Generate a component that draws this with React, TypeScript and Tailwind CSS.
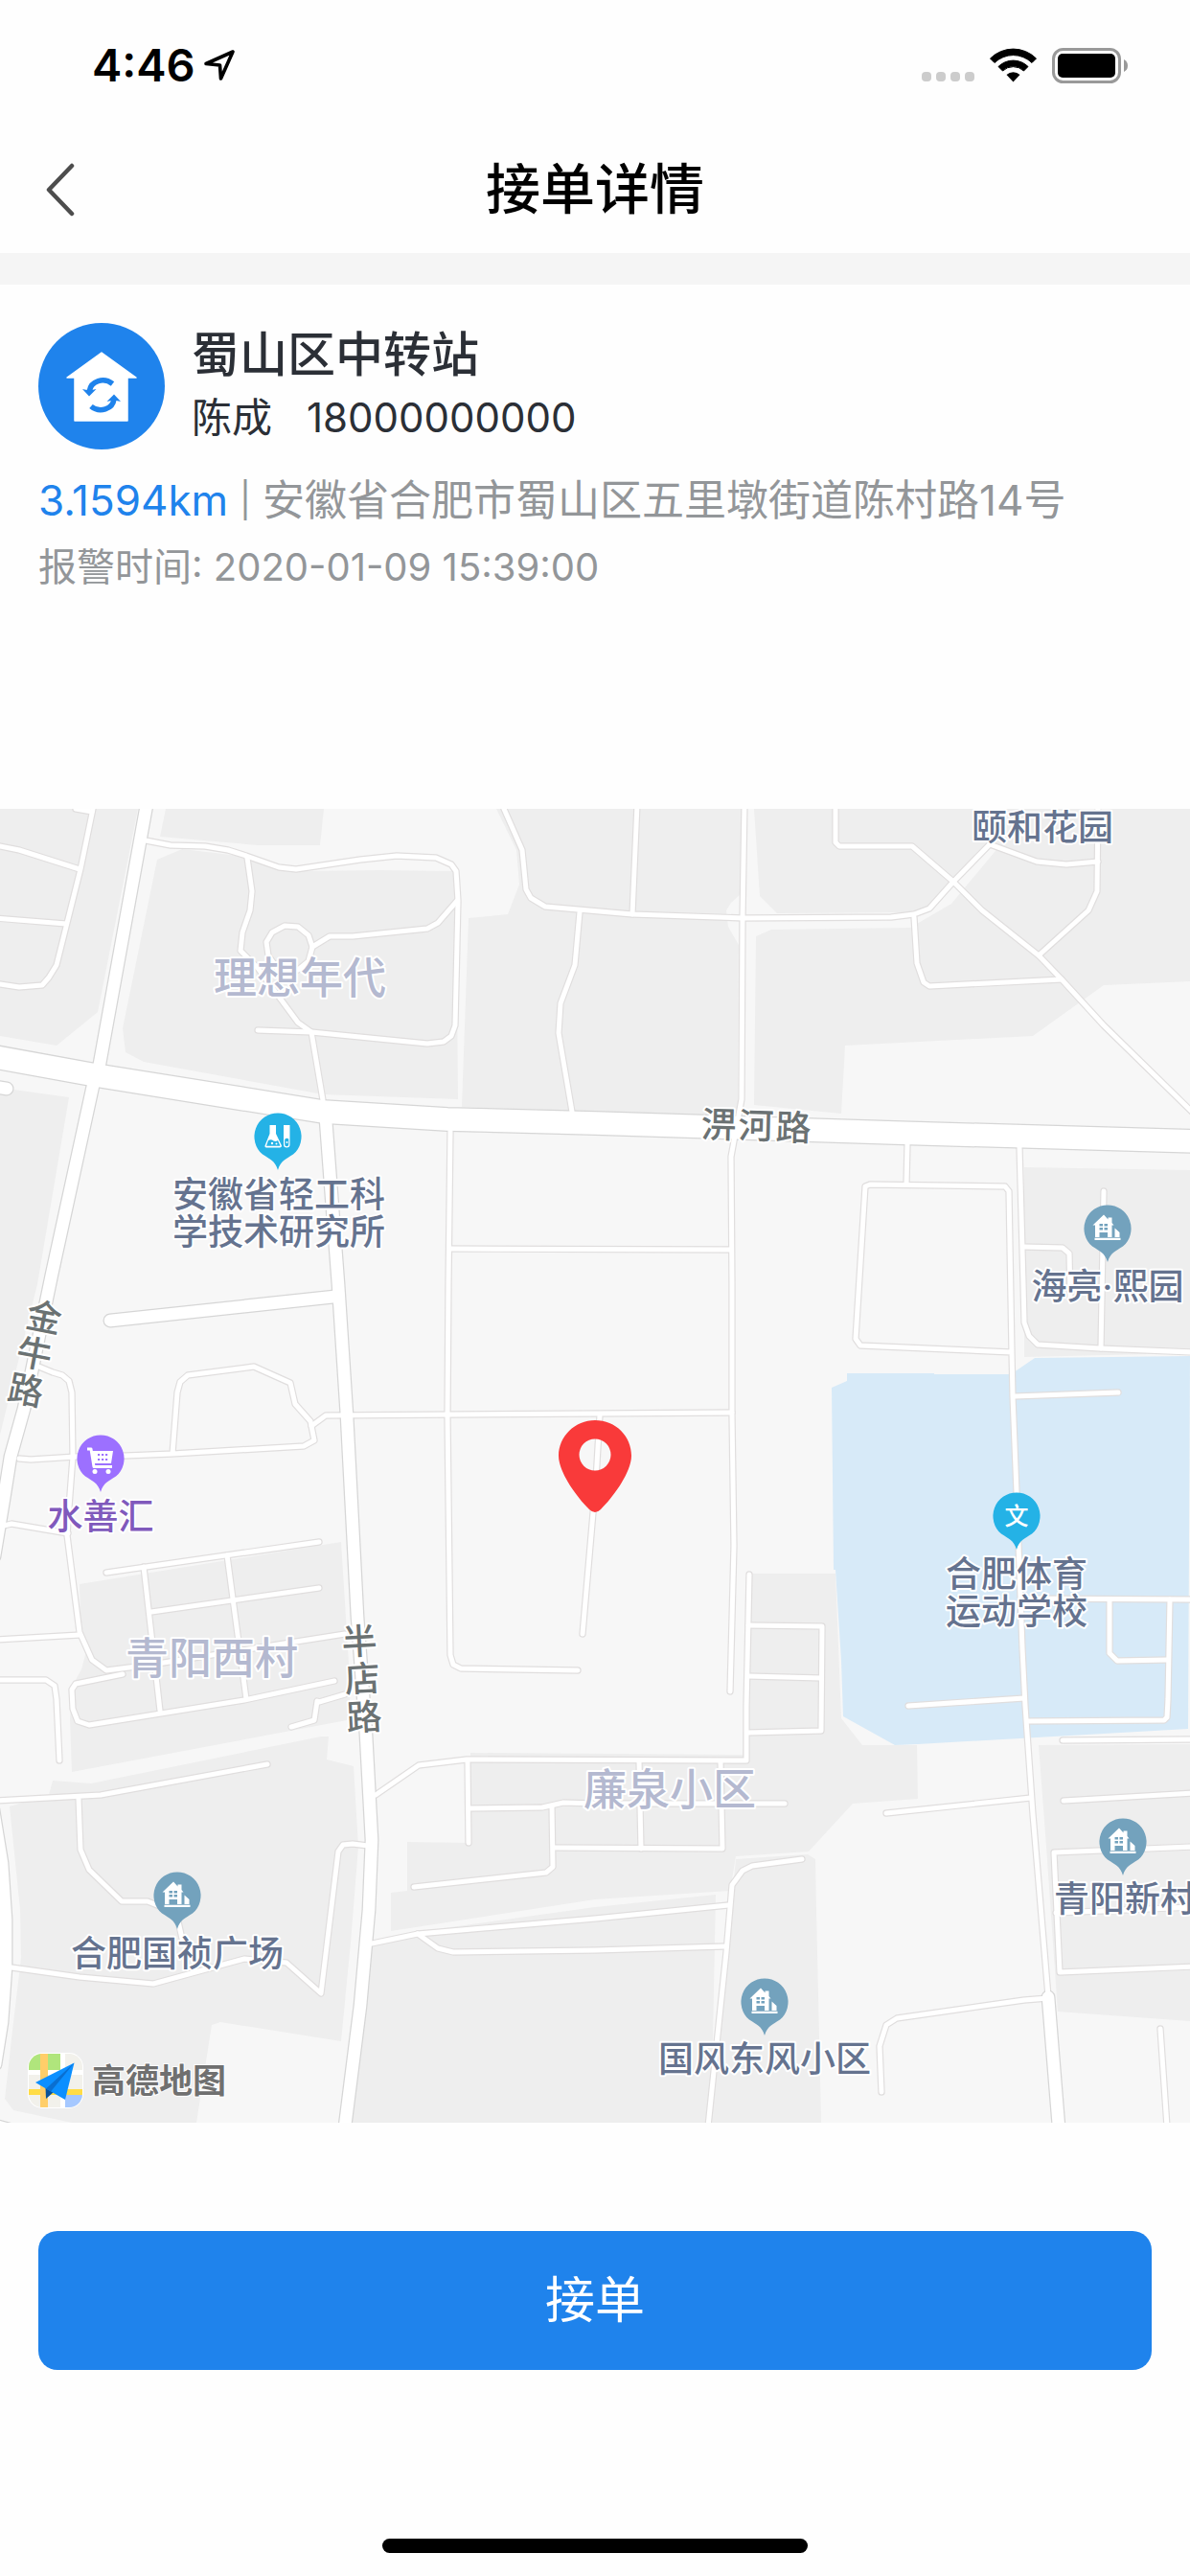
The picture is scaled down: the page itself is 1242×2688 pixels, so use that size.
import type { ReactNode } from "react";

const BLOCKS = [
  "0,0 144,0 102,212 59,247 0,237",
  "173,0 338,0 334,38 269,38 167,29",
  "164,53 190,42 250,49 291,63 309,65 396,64 476,65 478,303 337,298 150,264 131,254 128,229",
  "518,0 539,43 542,79 530,110 489,114 482,311 621,316 770,320 771,142 760,123 758,106 763,98 773,89 775,0",
  "787,0 793,91 811,109 950,108 970,102 1033,37 1050,0",
  "1043,39 993,99 950,124 805,126 789,133 787,309 878,318 882,247 1078,237 1152,184 1242,180 1242,0 1034,0 1034,37",
  "1069,374 1242,377 1242,568 1069,572",
  "0,291 72,301 39,496 0,653",
  "83,809 356,765 366,923 362,951 75,1005 73,950 75,916 85,898 90,879 84,843",
  "55,1014 95,1017 335,968 343,968 341,992 369,999 374,1083 366,1183 356,1286 230,1266 221,1269 205,1371 75,1371 14,1358 5,1346 14,1266 22,1199 21,1149 10,1041 51,1029",
  "491,985 775,987 779,798 872,798 878,949 900,977 957,977 958,1033 890,1038 844,1088 768,1093 762,1129 621,1138 408,1171 408,1131 425,1129 425,1078 489,1079",
  "388,1184 434,1172 621,1146 747,1133 744,1283 740,1371 367,1371",
  "768,1096 843,1091 851,1096 852,1149 857,1371 740,1371 758,1193",
  "1084,977 1242,976 1242,1265 1104,1255 1092,1083",
];

const CAMPUS =
  "884,589 975,589 975,590 1053,590 1061,586 1080,573 1242,571 1240,960 958,976 934,977 880,947 878,889 874,826 872,794 870,794 868,604 884,597";

const LANES = [
  "79,0 96,3",
  "97,0 84,63 59,163 51,176 44,184 20,186 0,183",
  "-5,38 20,43 83,63",
  "-5,114 69,120",
  "152,33 178,38 214,39 238,43 257,49 291,61 309,63 376,53 414,49 455,51 471,58 476,65 478,96 475,226 471,237 463,243 446,245 325,233 269,231",
  "258,51 263,86 261,106 253,129 251,148 269,166 291,196 311,223 325,233 337,304",
  "291,169 280,153 278,139 284,129 297,122 311,123 322,132 326,144 322,159 311,168 291,169",
  "326,144 344,133 368,133 446,125 457,119 477,96",
  "526,0 545,43 549,84 554,93 569,102 660,110 775,114 930,113 954,110 970,104 995,76 1033,37 1082,55 1113,58 1146,55",
  "605,108 600,163 585,203 583,234 597,316",
  "665,-5 660,110",
  "777,-5 775,114 774,303 763,363 764,496 764,633 766,769 762,921",
  "872,-5 872,35 876,39 952,39 995,76 1025,106 1084,153 1108,178 1152,226 1245,317",
  "1146,-5 1145,86 1136,106 1084,153",
  "954,113 957,161 964,181 970,185 1108,178",
  "947,350 946,391",
  "1056,567 898,560 893,553 903,394 908,392 1049,394 1053,399 1056,567 1057,613 1061,713 1067,876 1070,936 1078,1049 1094,1239",
  "1064,353 1068,496 1069,536 1074,550 1083,559 1148,563 1245,567",
  "1068,457 1109,458 1116,464 1117,510",
  "1152,399 1149,563",
  "469,459 763,460",
  "470,336 468,496 467,633 470,883 473,893 481,897 603,899",
  "325,644 340,633 621,631 764,630",
  "38,581 55,588 65,591 72,597 75,609 76,676 72,729 70,758 83,859 96,888 111,899 158,893 309,869 360,861",
  "20,678 32,679 79,676 131,675 180,673 317,665 328,659 324,639 308,621 303,599 265,582 196,591 188,598 185,609 180,673",
  "4,748 12,746 71,756",
  "111,797 333,765",
  "150,791 167,941",
  "237,779 257,929",
  "158,838 333,813",
  "-5,867 83,862",
  "-5,909 48,909 57,915 59,929 62,993",
  "128,903 79,913 75,919 76,939 81,952 93,956 255,930 349,910",
  "360,924 333,932 331,931 328,951 304,958",
  "1059,613 1167,609",
  "1067,824 1245,825",
  "1158,825 1158,881 1166,889 1219,888",
  "1221,825 1219,929 1218,948 1215,951 1072,952",
  "948,936 1069,928",
  "782,799 779,936 779,993 487,992 437,998 392,1029",
  "781,852 858,853 857,962 781,964",
  "781,905 857,907",
  "626,633 622,700 608,861",
  "-5,1035 105,1029 279,997",
  "82,1033 84,1086 93,1107 127,1140 154,1140 184,1152 190,1179",
  "12,1209 83,1219 160,1226 255,1200 299,1204 335,1236 353,1088 358,1081 368,1080 384,1082",
  "388,1184 436,1174 621,1158 760,1144",
  "436,1174 457,1189 473,1193 621,1191 756,1187",
  "488,994 489,1079",
  "491,1043 566,1042 588,1037 621,1038 819,1038",
  "576,1041 577,1104 570,1110 432,1125",
  "578,1084 754,1085 752,994",
  "667,994 669,1085",
  "837,1096 785,1103 775,1108 764,1123 758,1193 739,1375",
  "925,1048 1076,1032",
  "1094,1241 1069,1243 936,1262 925,1269 918,1291 920,1339",
  "1109,972 1245,971",
  "1110,1035 1245,1027",
  "1245,1083 1100,1089 1106,1214 1245,1208",
  "1102,1152 1245,1146",
  "1211,1273 1218,1375",
];

const STREETS = [
  "153,-4 104,266 97,289 54,486 25,626 11,676 4,720 -6,780",
  "340,324 353,496 362,633 373,843 382,966 388,1076 385,1149 376,1249 360,1375",
  "115,534 349,509",
  "-12,289 7,292",
  "1094,1240 1105,1375",
  "-7,1045 2,1100 6,1159 6,1209 2,1266 -5,1310",
  "-20,1370 20,1381",
];

const AVENUE = "-10,258 100,278 337,316 467,324 621,328 934,338 1250,347";

const POI = "#65738f";
const AREA = "#b4b9d0";
const ROAD = "#6b7273";

type LabelProps = { x: number; y: number; lines: string[]; color?: string; area?: boolean };

function MapLabel({ x, y, lines, color = POI, area = false }: LabelProps) {
  return (
    <text
      textAnchor="middle"
      fill={color}
      stroke="#ffffff"
      strokeWidth={4}
      strokeLinejoin="round"
      paintOrder="stroke"
      className={area ? "text-[45px] font-medium" : "text-[37px] font-medium"}
    >
      {lines.map((line, i) => (
        <tspan key={line} x={x} y={y + i * 39}>
          {line}
        </tspan>
      ))}
    </text>
  );
}

function RoadName({ glyphs, angle }: { glyphs: [string, number, number][]; angle: number }) {
  return (
    <g fill={ROAD} stroke="#ffffff" strokeWidth={4} strokeLinejoin="round" textAnchor="middle" className="text-[37px] font-medium">
      {glyphs.map(([char, x, y]) => (
        <text key={char} paintOrder="stroke" transform={`translate(${x} ${y}) rotate(${angle})`} y={14}>
          {char}
        </text>
      ))}
    </g>
  );
}

function Pin({ x, y, color, children }: { x: number; y: number; color: string; children: ReactNode }) {
  return (
    <g transform={`translate(${x} ${y})`}>
      <path
        fill={color}
        d="M0-24.5A24.5 24.5 0 0 1 16 18.6C8 24 3 25 0 35C-3 25-8 24-16 18.6A24.5 24.5 0 0 1 0-24.5Z"
      />
      {children}
    </g>
  );
}

function HousePin({ x, y }: { x: number; y: number }) {
  return (
    <Pin x={x} y={y} color="#73a2bd">
      <path
        fill="#fff"
        fillRule="evenodd"
        d="M-4-14.5L0.5-9.5V-11.5H4.5V-6L6.5-3.5H4.5V9H0V4H-8.5V9H-13V-3.5H-15.5ZM-8.5-5V-2.5H-5V-5ZM-3.5-5V-2.5H0V-5ZM-8.5-1V1.5H-5V-1ZM-3.5-1V1.5H0V-1Z"
      />
      <path fill="#fff" d="M7.5-0.5L12.5 4V9H7.5ZM-13.5 9.8H13.5V12H-13.5Z" />
    </Pin>
  );
}

function DistrictMap() {
  return (
    <svg viewBox="0 0 1242 1371" className="block h-auto w-full" role="img" aria-label="地图">
      <rect width="1242" height="1371" fill="#f7f7f7" />
      <g fill="#eeeeee">
        {BLOCKS.map((p) => (
          <polygon key={p} points={p} />
        ))}
      </g>
      <polygon points={CAMPUS} fill="#d7eaf8" />

      <g fill="none" strokeLinecap="round" strokeLinejoin="round">
        <g stroke="#e0dede" strokeWidth={7.4}>
          {LANES.map((p) => (
            <polyline key={p} points={p} />
          ))}
        </g>
        <g stroke="#d6d6d6" strokeWidth={15}>
          {STREETS.map((p) => (
            <polyline key={p} points={p} />
          ))}
        </g>
        <polyline points={AVENUE} stroke="#d6d6d6" strokeWidth={26} />
        <g stroke="#ffffff">
          <g strokeWidth={5}>
            {LANES.map((p) => (
              <polyline key={p} points={p} />
            ))}
          </g>
          <g strokeWidth={12.5}>
            {STREETS.map((p) => (
              <polyline key={p} points={p} />
            ))}
          </g>
          <polyline points={AVENUE} strokeWidth={23.5} />
        </g>
      </g>

      <MapLabel x={1088} y={33} lines={["颐和花园"]} />
      <MapLabel x={313} y={193} lines={["理想年代"]} color={AREA} area />
      <MapLabel x={221} y={903} lines={["青阳西村"]} color={AREA} area />
      <MapLabel x={699} y={1040} lines={["廉泉小区"]} color={AREA} area />
      <MapLabel x={291} y={416} lines={["安徽省轻工科", "学技术研究所"]} />
      <MapLabel x={1156} y={512} lines={["海亮·熙园"]} />
      <MapLabel x={105} y={752} lines={["水善汇"]} color="#8059bc" />
      <MapLabel x={1061} y={812} lines={["合肥体育", "运动学校"]} />
      <MapLabel x={185} y={1208} lines={["合肥国祯广场"]} />
      <MapLabel x={1174} y={1151} lines={["青阳新村"]} />
      <MapLabel x={798} y={1318} lines={["国风东风小区"]} />
      <RoadName angle={1.5} glyphs={[["淠", 750, 329], ["河", 789, 330], ["路", 828, 332]]} />
      <RoadName angle={11} glyphs={[["金", 46, 530], ["牛", 36, 568], ["路", 27, 606]]} />
      <RoadName angle={-3} glyphs={[["半", 375, 868], ["店", 378, 907], ["路", 380, 947]]} />

      <Pin x={290} y={342} color="#24b2e6">
        <path fill="#fff" d="M-8.5-12H-2V-3L4 9.5Q4 11.5 2 11.5H-12Q-14 11.5-13.5 9.5L-8.5-3ZM6-12H12.5V8.5Q12.5 11.5 9.2 11.5Q6 11.5 6 8.5Z" />
        <path fill="#24b2e6" d="M-10 4Q-7 2.500-4.500 4.500Q-2 5.500 0 4L2.500 9.800H-12ZM7.200 3Q9 1 11.300 2.500V8Q11.300 10.300 9.200 10.300Q7.200 10.300 7.200 8Z" />
        <circle cx="-6" cy="7" r="1.200" fill="#fff" />
        <circle cx="-1.500" cy="7.500" r="1" fill="#fff" />
        <circle cx="9.500" cy="6" r="1" fill="#fff" />
      </Pin>
      <Pin x={1061} y={738} color="#24b2e6">
        <text textAnchor="middle" y={9} fill="#fff" className="text-[25px] font-medium">
          文
        </text>
      </Pin>
      <Pin x={105} y={678} color="#9c70ff">
        <path d="M-14-10H-10L-7 8.500H12" fill="none" stroke="#fff" strokeWidth={3} strokeLinejoin="round" />
        <path fill="#fff" d="M-9.500-8H13L11 5H-7.500Z" />
        <path
          fill="none"
          stroke="#9c70ff"
          strokeWidth={2.2}
          d="M-3-4H-.8M1-4H3.200M5-4H7.200M-3 1H-.8M1 1H3.200M5 1H7.200"
        />
        <circle cx="-6" cy="13.500" r="2.500" fill="#fff" />
        <circle cx="8" cy="13.500" r="2.500" fill="#fff" />
      </Pin>
      <HousePin x={1156} y={438} />
      <HousePin x={185} y={1134} />
      <HousePin x={1172} y={1078} />
      <HousePin x={798} y={1245} />

      <path
        fill="#f93a3a"
        fillRule="evenodd"
        d="M621 638C643 638 659 655 659 675C659 691 642 716 627 731Q621 737 615 731C600 716 583 691 583 675C583 655 600 638 621 638ZM621 657.500A16.500 16.500 0 1 0 621 690.500A16.500 16.500 0 1 0 621 657.500Z"
      />

      <g transform="translate(30 1299)">
        <clipPath id="amap-tile">
          <rect width="56" height="56" rx="14" />
        </clipPath>
        <rect x="-1" y="-1" width="58" height="58" rx="15" fill="#fff" />
        <g clipPath="url(#amap-tile)">
          <rect width="56" height="56" fill="#f2f1eb" />
          <path fill="#b0e57c" d="M0 0H33V17H0Z" />
          <path fill="#fff" d="M33 0H38V56H33ZM0 17H56V22H0Z" />
          <path fill="#a5c8ff" d="M38 43H56V56H38Z" />
          <path fill="#ffdc46" d="M0 37H56V43H0Z" />
          <path fill="#ffce69" d="M12 0H20V56H12Z" />
        </g>
        <path fill="#0a5199" d="M17.500 35L18 47L26 40Z" />
        <path fill="#0b8fff" d="M47.500 9.500L7 30L18 36.500L38 48Z" />
        <path fill="#0a6fd0" d="M47.500 9.500L18 36.500L23 39.500Z" />
      </g>
      <text x={96} y={1340} fill="#707070" stroke="#fff" strokeWidth={2} paintOrder="stroke" className="text-[35px] font-bold">
        高德地图
      </text>
    </svg>
  );
}

function StatusBar() {
  return (
    <div className="flex h-[132px] items-center justify-between pr-16 pl-24 text-black">
      <div className="flex items-center gap-2 pt-1">
        <span className="text-[47px] leading-[56px] font-semibold">4:46</span>
        <svg width="34" height="34" viewBox="0 0 34 34" aria-hidden="true">
          <path d="M31 3L3 15.500L17.500 17L18.500 31Z" fill="none" stroke="currentColor" strokeWidth="3.600" strokeLinejoin="round" />
        </svg>
      </div>
      <div className="flex items-center gap-4 pt-1">
        <div className="flex gap-[5px] pt-6">
          <i className="size-[10px] rounded bg-[#cccccc]" />
          <i className="size-[10px] rounded bg-[#cccccc]" />
          <i className="size-[10px] rounded bg-[#cccccc]" />
          <i className="size-[10px] rounded bg-[#cccccc]" />
        </div>
        <svg width="49" height="36" viewBox="0 0 49 36" aria-label="Wi-Fi">
          <path d="M0.500 11A34 34 0 0 1 48.500 11L44 15.500A28 28 0 0 0 5 15.500Z" stroke="currentColor" strokeWidth="1" strokeLinejoin="round" />
          <path d="M9 19.500A22 22 0 0 1 40 19.500L35.500 24A16 16 0 0 0 13.500 24Z" stroke="currentColor" strokeWidth="1" strokeLinejoin="round" />
          <path d="M17.500 28A10.500 10.500 0 0 1 31.500 28L24.500 35.500Z" />
        </svg>
        <svg width="80" height="37" viewBox="0 0 80 37" aria-label="电量">
          <rect x="1.500" y="1.500" width="69" height="34" rx="10" fill="none" stroke="#999999" strokeWidth="3" />
          <rect x="6" y="6" width="60" height="25" rx="5" />
          <path d="M75 12Q79 14 79 18.500Q79 23 75 25Z" fill="#999999" />
        </svg>
      </div>
    </div>
  );
}

function StationAvatar() {
  return (
    <svg viewBox="0 0 132 132" className="size-[132px] shrink-0" aria-hidden="true">
      <circle cx="66" cy="66" r="66" fill="#1f83ec" />
      <path fill="#fff" stroke="#fff" strokeWidth="1.500" strokeLinejoin="round" d="M66 31L102 57H93V102H38V57H30Z" />
      <g fill="none" stroke="#1f83ec" strokeWidth="5.500">
        <path d="M77.500 63.500C68 56 55 61 53.500 70.500" />
        <path d="M55 87C64 94.500 78 90 79 79" />
      </g>
      <path fill="#1f83ec" d="M46 69Q53 71 60.500 69L53 76.500ZM71.500 82Q79 80 86 82L79 74.500Z" />
    </svg>
  );
}

export default function App() {
  return (
    <div className="flex min-h-screen w-full flex-col bg-[#fefefe] font-['Inter','Noto_Sans_CJK_SC',sans-serif]">
      <header>
        <StatusBar />
        <div className="grid h-[132px] grid-cols-[1fr_auto_1fr] items-center">
          <button type="button" aria-label="返回" className="justify-self-start py-4 pr-6 pl-12">
            <svg width="30" height="56" viewBox="0 0 30 56" aria-hidden="true">
              <path d="M27 3L3 28L27 53" fill="none" stroke="#4d4d4d" strokeWidth="4.500" strokeLinecap="round" strokeLinejoin="round" />
            </svg>
          </button>
          <h1 className="text-[57px] leading-[80px] font-medium text-black">接单详情</h1>
        </div>
        <div className="h-[33px] bg-[#f5f5f5]" />
      </header>

      <section className="mb-[217px] px-10 pt-10">
        <div className="flex items-center gap-7">
          <StationAvatar />
          <div className="text-[#2b2f36]">
            <h2 className="text-[50px] leading-[66px] font-medium">蜀山区中转站</h2>
            <p className="flex gap-9 text-[42px] leading-[66px]">
              <span>陈成</span>
              <span>18000000000</span>
            </p>
          </div>
        </div>
        <p className="mt-[18px] flex gap-3 text-[44px] leading-[70px] text-[#939699]">
          <span className="text-[#1f83ec]">3.1594km</span>
          <span className="text-[36px]">|</span>
          <span>安徽省合肥市蜀山区五里墩街道陈村路14号</span>
        </p>
        <p className="text-[40px] leading-[70px] text-[#939699]">报警时间: 2020-01-09 15:39:00</p>
      </section>

      <DistrictMap />

      <div className="px-10 pt-[113px]">
        <button type="button" className="h-[145px] w-full rounded-[20px] bg-[#1f83ec] text-[52px] text-white">
          接单
        </button>
      </div>

      <div className="mt-auto flex justify-center pt-10 pb-6">
        <div className="h-[15px] w-[444px] rounded-full bg-black" />
      </div>
    </div>
  );
}
